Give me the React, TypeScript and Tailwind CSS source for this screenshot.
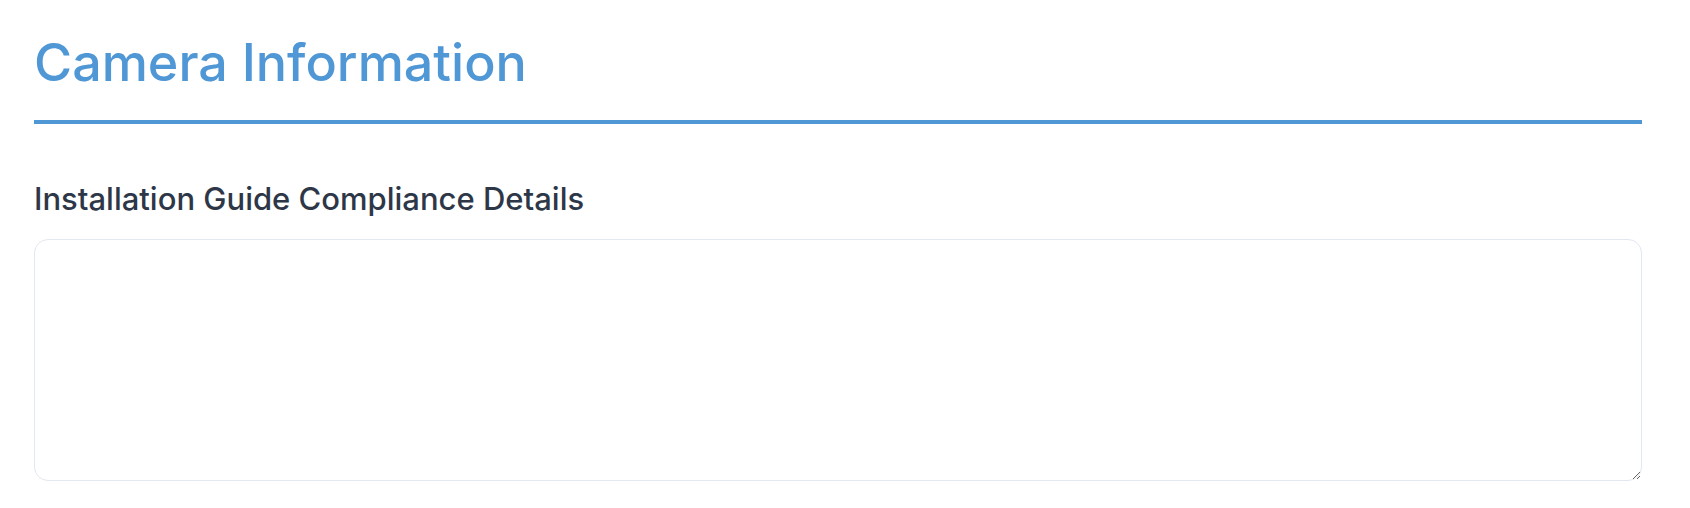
export default function App() {
  return (
    <div className="min-h-screen bg-white font-['Inter','Liberation_Sans',sans-serif]">
      <div className="ml-[34px] w-[1608px] pt-[32px]">
        <h1 className="text-[52px] leading-[62px] font-medium text-[#5097d6] pb-[26px] border-b-4 border-[#5097d6]">
          Camera Information
        </h1>
        <label
          htmlFor="compliance"
          className="block mt-[52px] text-[31px] leading-[46px] font-medium text-[#2d3748]"
        >
          Installation Guide Compliance Details
        </label>
        <textarea
          id="compliance"
          className="block mt-[17px] w-full h-[242px] rounded-[14px] border-[1.5px] border-[#e2e8f0] bg-white p-3 outline-none"
        />
      </div>
    </div>
  )
}
